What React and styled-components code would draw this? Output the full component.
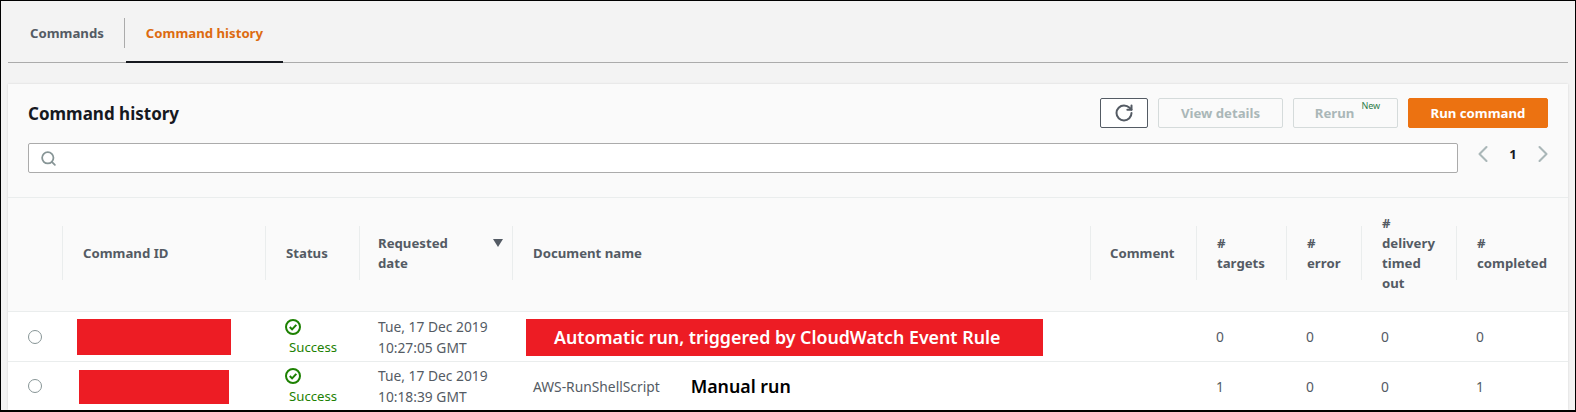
import { Fragment } from "react";
import styled, { createGlobalStyle } from "styled-components";
import { LuRotateCw, LuSearch, LuChevronLeft, LuChevronRight } from "react-icons/lu";

const GlobalStyle = createGlobalStyle`
  html, body {
    margin: 0;
    padding: 0;
    background: #f3f3f3;
  }
  body {
    font-family: "Noto Sans", "Open Sans", sans-serif;
    font-size: 13.2px;
    color: #545b64;
  }
`;

const Frame = styled.div`
  box-sizing: border-box;
  width: 1576px;
  height: 412px;
  overflow: hidden;
  border: solid #000;
  border-width: 1px 1px 2px 1px;
  padding: 0 7px;
  background: #f3f3f3;
`;

const Tabs = styled.div`
  display: flex;
  align-items: flex-end;
  height: 61px;
  border-bottom: 1px solid #ababab;
`;

const Tab = styled.div`
  box-sizing: border-box;
  display: flex;
  align-items: center;
  height: 45px;
  margin-bottom: -1px;
  padding: 0 20px 14px ${(p) => (p.$active ? 20 : 22)}px;
  font-size: 13.2px;
  font-weight: 700;
  color: ${(p) => (p.$active ? "#dd6b10" : "#545b64")};
  border-bottom: 2px solid ${(p) => (p.$active ? "#16191f" : "transparent")};
`;

const TabDivider = styled.div`
  width: 1px;
  height: 30px;
  margin: 0 1px 14px 0;
  background: #ababab;
`;

const Card = styled.section`
  margin-top: 21px;
  background: #fafafa;
  box-shadow: 0 0 2px rgba(0, 0, 0, 0.12);
`;

const CardHead = styled.div`
  display: flex;
  flex-direction: column;
  gap: 15px;
  height: 114px;
  box-sizing: border-box;
  padding: 14px 20px 0;
  border-bottom: 1px solid #eaeded;
`;

const TitleRow = styled.div`
  display: flex;
  align-items: center;
  height: 30px;
`;

const Title = styled.h2`
  flex: 1;
  margin: 0;
  font-size: 17px;
  font-weight: 700;
  color: #16191f;
`;

const Button = styled.button`
  box-sizing: border-box;
  display: flex;
  align-items: center;
  justify-content: center;
  width: ${(p) => p.$width}px;
  height: 30px;
  margin-left: 10px;
  padding: 0 0 0 ${(p) => p.$shift ?? 0}px;
  border-radius: 2px;
  border: 1px solid ${(p) => (p.$primary ? "#ec7211" : p.$dark ? "#545b64" : "#d5dbdb")};
  background: ${(p) => (p.$primary ? "#ec7211" : p.$dark ? "#fff" : "#fafafa")};
  color: ${(p) => (p.$primary ? "#fff" : p.$dark ? "#545b64" : "#aab7b8")};
  font-family: inherit;
  font-size: 13.2px;
  font-weight: 700;
`;

const NewTag = styled.span`
  align-self: flex-start;
  margin: 1px 0 0 7px;
  font-size: 9px;
  line-height: 11px;
  font-weight: 400;
  color: #2f7d4a;
`;

const SearchRow = styled.div`
  display: flex;
  align-items: flex-start;
`;

const SearchBox = styled.div`
  box-sizing: border-box;
  display: flex;
  align-items: center;
  width: 1430px;
  height: 30px;
  padding-left: 11px;
  background: #fff;
  border: 1px solid #ababab;
  border-radius: 2px;
  color: #879596;
`;

const Pager = styled.div`
  display: flex;
  align-items: center;
  justify-content: space-between;
  flex: 1;
  margin: -3px -9px 0 11px;
  color: #aab7b8;
`;

const PageNum = styled.span`
  font-size: 13px;
  font-weight: 700;
  color: #16191f;
`;

const Grid = styled.div`
  display: grid;
  grid-template-columns: 54px 203px 94px 153px 578px 106px 90px 75px 95px 112px;
`;

const HeadCell = styled.div`
  position: relative;
  box-sizing: border-box;
  display: flex;
  align-items: center;
  justify-content: space-between;
  height: 114px;
  padding: 0 20px 4px ${(p) => p.$pad ?? 21}px;
  font-size: 13.2px;
  line-height: 20px;
  font-weight: 700;
  color: #545b64;
  background: #fafafa;
  border-bottom: 1px solid #eaeded;

  &::before {
    content: "";
    display: ${(p) => (p.$first ? "none" : "block")};
    position: absolute;
    left: 0;
    top: 28px;
    height: 54px;
    width: 1px;
    background: #eaeded;
  }
`;

const SortMark = styled.span`
  align-self: flex-start;
  margin: 41px -11px 0 0;
  width: 0;
  height: 0;
  border-left: 5.5px solid transparent;
  border-right: 5.5px solid transparent;
  border-top: 8px solid #545b64;
`;

const Cell = styled.div`
  position: relative;
  box-sizing: border-box;
  display: flex;
  align-items: center;
  height: ${(p) => p.$height}px;
  padding: 0 20px 0 ${(p) => p.$pad ?? 20}px;
  font-size: 13.8px;
  line-height: 21px;
  color: #545b64;
  background: #fff;
  border-bottom: ${(p) => (p.$last ? "none" : "1px solid #eaeded")};
`;

const RadioCell = styled(Cell)`
  padding: 0 0 0 20px;
`;

const Radio = styled.span`
  flex: none;
  box-sizing: border-box;
  width: 14px;
  height: 14px;
  border-radius: 50%;
  border: 1px solid #879596;
  background: #fff;
`;

// red blocks painted over the screenshot to hide ids
const Redaction = styled.div`
  position: absolute;
  left: ${(p) => p.$left}px;
  top: ${(p) => p.$top}px;
  width: ${(p) => p.$width}px;
  height: ${(p) => p.$height}px;
  display: flex;
  align-items: center;
  padding-left: 28px;
  box-sizing: border-box;
  background: #ed1c24;
  color: #fff;
  font-size: 17.8px;
  font-weight: 600;
  white-space: nowrap;
`;

const StatusWrap = styled.div`
  display: flex;
  flex-direction: column;
  padding-top: 2px;
  color: #1d8102;
  font-size: 13.2px;
  line-height: 20px;
`;

const StatusIcon = styled.svg`
  display: block;
  width: 16px;
  height: 16px;
  margin-bottom: 2px;
`;

const StatusText = styled.span`
  margin-left: 4px;
`;

const Annotation = styled.span`
  margin-left: 31px;
  font-size: 17.8px;
  font-weight: 600;
  color: #000;
`;

function Success() {
  return (
    <StatusWrap>
      <StatusIcon viewBox="0 0 16 16" fill="none" stroke="#1d8102" strokeWidth="2">
        <circle cx="8" cy="8" r="7" />
        <path d="M4.8 8l2.3 2.4 4.2-4.6" />
      </StatusIcon>
      <StatusText>Success</StatusText>
    </StatusWrap>
  );
}

const heads = [
  { lines: ["Command ID"] },
  { lines: ["Status"] },
  { lines: ["Requested", "date"], pad: 19 },
  { lines: ["Document name"] },
  { lines: ["Comment"], pad: 20 },
  { lines: ["#", "targets"] },
  { lines: ["#", "error"] },
  { lines: ["#", "delivery", "timed", "out"] },
  { lines: ["#", "completed"] },
];

const rows = [
  {
    height: 50,
    redact: { $left: 15, $top: 7, $width: 154, $height: 36 },
    date: ["Tue, 17 Dec 2019", "10:27:05 GMT"],
    counts: [0, 0, 0, 0],
  },
  {
    height: 48,
    redact: { $left: 17, $top: 8, $width: 150, $height: 34 },
    date: ["Tue, 17 Dec 2019", "10:18:39 GMT"],
    counts: [1, 0, 0, 1],
    last: true,
  },
];

function App() {
  return (
    <Frame>
      <GlobalStyle />
      <Tabs>
        <Tab>Commands</Tab>
        <TabDivider />
        <Tab $active>Command history</Tab>
      </Tabs>

      <Card>
        <CardHead>
          <TitleRow>
            <Title>Command history</Title>
            <Button $width={48} $dark>
              <LuRotateCw size={20} strokeWidth={2.4} />
            </Button>
            <Button $width={125}>View details</Button>
            <Button $width={105} $shift={4}>
              Rerun
              <NewTag>New</NewTag>
            </Button>
            <Button $width={140} $primary>
              Run command
            </Button>
          </TitleRow>
          <SearchRow>
            <SearchBox>
              <LuSearch size={17} strokeWidth={2.5} />
            </SearchBox>
            <Pager>
              <LuChevronLeft size={28} strokeWidth={1.8} />
              <PageNum>1</PageNum>
              <LuChevronRight size={28} strokeWidth={1.8} />
            </Pager>
          </SearchRow>
        </CardHead>

        <Grid>
          <HeadCell $first />
          {heads.map(({ lines, pad }) => (
            <HeadCell key={lines.join(" ")} $pad={pad}>
              <div>
                {lines.map((line) => (
                  <div key={line}>{line}</div>
                ))}
              </div>
              {lines[0] === "Requested" && <SortMark />}
            </HeadCell>
          ))}

          {rows.map((row) => {
            const cellProps = { $height: row.height, $last: row.last };
            return (
              <Fragment key={row.date[1]}>
                <RadioCell {...cellProps}>
                  <Radio />
                </RadioCell>
                <Cell {...cellProps}>
                  <Redaction {...row.redact} />
                </Cell>
                <Cell {...cellProps}>
                  <Success />
                </Cell>
                <Cell {...cellProps} $pad={19}>
                  <div>
                    <div>{row.date[0]}</div>
                    <div>{row.date[1]}</div>
                  </div>
                </Cell>
                <Cell {...cellProps} $pad={21}>
                  {row.last ? (
                    <>
                      AWS-RunShellScript
                      <Annotation>Manual run</Annotation>
                    </>
                  ) : (
                    <Redaction $left={14} $top={7} $width={517} $height={37}>
                      Automatic run, triggered by CloudWatch Event Rule
                    </Redaction>
                  )}
                </Cell>
                <Cell {...cellProps} />
                {row.counts.map((n, i) => (
                  <Cell key={i} {...cellProps}>
                    {n}
                  </Cell>
                ))}
              </Fragment>
            );
          })}
        </Grid>
      </Card>
    </Frame>
  );
}

export default App;
